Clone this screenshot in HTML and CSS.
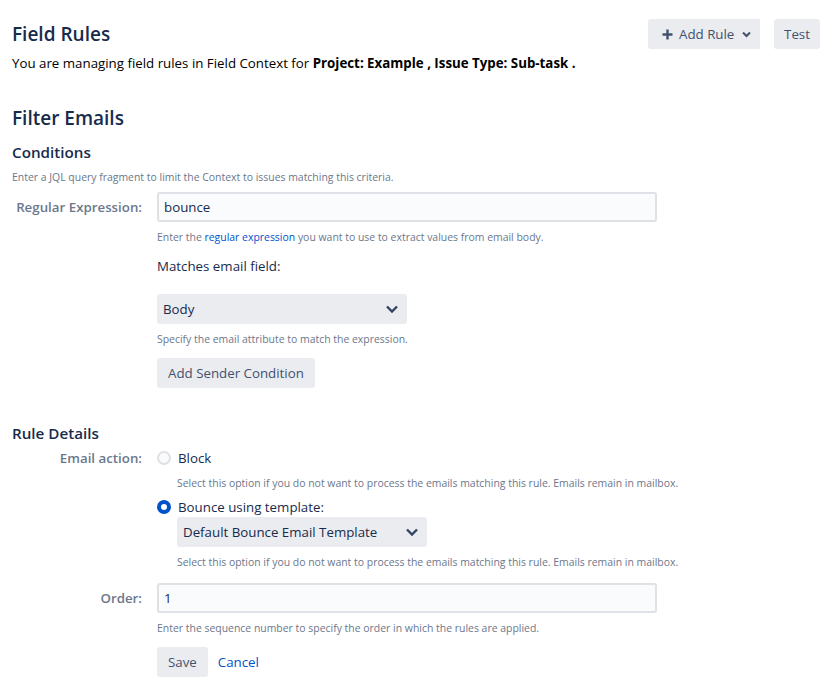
FILE: index.html
```html
<!DOCTYPE html>
<html lang="en">
<head>
    <meta charset="UTF-8">
    <meta name="viewport" content="width=device-width, initial-scale=1.0">
    <title>Field Rules</title>
    <link rel="stylesheet" href="styles.css">
</head>
<body>
    <div class="page">
        <div class="header">
            <h1 class="title">Field Rules</h1>
            <div class="actions">
                <button class="btn btn-drop">
                    <svg class="plus" width="11" height="11" viewBox="0 0 11 11"><path d="M5.5 0.5v10M0.5 5.5h10" stroke="#42526e" stroke-width="2.4"/></svg>
                    <span>Add Rule</span>
                    <svg class="chev-sm" width="9" height="7" viewBox="0 0 9 7"><path d="M1 1.5l3.5 3.5L8 1.5" fill="none" stroke="#42526e" stroke-width="2"/></svg>
                </button>
                <button class="btn btn-test">Test</button>
            </div>
        </div>
        <p class="subtitle">You are managing field rules in Field Context for <b>Project: Example , Issue Type: Sub-task .</b></p>

        <h2 class="rule-name">Filter Emails</h2>
        <h3 class="section">Conditions</h3>
        <p class="desc">Enter a JQL query fragment to limit the Context to issues matching this criteria.</p>

        <form class="formm">
            <div class="row">
                <label class="lbl">Regular Expression:</label>
                <div class="field">
                    <input class="text" type="text" value="bounce">
                    <p class="help">Enter the <a href="#">regular expression</a> you want to use to extract values from email body.</p>
                    <p class="sub-label">Matches email field:</p>
                    <div class="select">
                        <span>Body</span>
                        <svg width="14" height="10" viewBox="0 0 14 10"><path d="M2 2.5l5 5 5-5" fill="none" stroke="#344563" stroke-width="2.4"/></svg>
                    </div>
                    <p class="help">Specify the email attribute to match the expression.</p>
                    <button type="button" class="btn btn-sender">Add Sender Condition</button>
                </div>
            </div>

            <h3 class="section section-details">Rule Details</h3>

            <div class="row">
                <label class="lbl lbl-radio">Email action:</label>
                <div class="field">
                    <div class="radio-row">
                        <span class="radio"></span>
                        <span>Block</span>
                    </div>
                    <p class="help indent">Select this option if you do not want to process the emails matching this rule. Emails remain in mailbox.</p>
                    <div class="radio-row radio-row2">
                        <span class="radio checked"></span>
                        <span>Bounce using template:</span>
                    </div>
                    <div class="select select-tpl">
                        <span>Default Bounce Email Template</span>
                        <svg width="14" height="10" viewBox="0 0 14 10"><path d="M2 2.5l5 5 5-5" fill="none" stroke="#344563" stroke-width="2.4"/></svg>
                    </div>
                    <p class="help indent">Select this option if you do not want to process the emails matching this rule. Emails remain in mailbox.</p>
                </div>
            </div>

            <div class="row row-order">
                <label class="lbl">Order:</label>
                <div class="field">
                    <input class="text" type="text" value="1">
                    <p class="help">Enter the sequence number to specify the order in which the rules are applied.</p>
                    <div class="buttons">
                        <button type="button" class="btn btn-save">Save</button>
                        <a href="#" class="cancel">Cancel</a>
                    </div>
                </div>
            </div>
        </form>
    </div>
</body>
</html>
```

FILE: styles.css
```css
body {
    margin: 0;
    background-color: #fff;
    color: #172b4d;
    font-family: "Open Sans", "Noto Sans", sans-serif;
    font-size: 13.3px;
}
.page {
    padding: 19px 20px 0 12px;
}
.header {
    display: flex;
    justify-content: space-between;
    align-items: center;
    height: 30px;
}
.title {
    margin: 0;
    font-size: 19px;
    font-weight: 600;
    line-height: 30px;
}
.actions {
    display: flex;
    gap: 14px;
}
.btn {
    height: 30px;
    border: none;
    border-radius: 3px;
    background-color: #ebecf0;
    color: #42526e;
    font-family: inherit;
    font-size: 13.3px;
    padding: 0 11px;
    cursor: pointer;
}
.btn-drop {
    display: flex;
    align-items: center;
    width: 112px;
    padding: 0 9px 0 14px;
    border-radius: 3px 0 0 3px;
}
.btn-drop span {
    margin-left: 6px;
}
.chev-sm {
    margin-left: auto;
}
.btn-test {
    width: 46px;
    padding: 0;
}
.subtitle {
    margin: 4px 0 0;
    line-height: 20px;
    color: #000;
}
.subtitle b {
    font-weight: 700;
}
.rule-name {
    margin: 31px 0 0;
    font-size: 19px;
    font-weight: 600;
    line-height: 28px;
}
.section {
    margin: 9px 0 0;
    font-size: 15.2px;
    font-weight: 600;
    line-height: 22px;
}
.desc {
    margin: 6px 0 0;
    font-size: 10.45px;
    line-height: 16px;
    color: #6b778c;
}
.formm {
    margin-top: 7px;
}
.row {
    display: grid;
    grid-template-columns: 130px 1fr;
    column-gap: 15px;
}
.lbl {
    text-align: right;
    white-space: nowrap;
    color: #6b778c;
    font-weight: 600;
    line-height: 30px;
}
.lbl-radio {
    line-height: 20px;
}
.field {
    display: flex;
    flex-direction: column;
    align-items: flex-start;
}
.text {
    box-sizing: border-box;
    width: 500px;
    height: 30px;
    margin: 0;
    border: 2px solid #dfe1e6;
    border-radius: 3px;
    background-color: #fafbfc;
    color: #172b4d;
    font-family: inherit;
    font-size: 13.3px;
    padding: 0 5px;
}
.help {
    margin: 7px 0 0;
    font-size: 10.45px;
    line-height: 16px;
    color: #6b778c;
}
.help a {
    color: #0052cc;
    text-decoration: none;
}
.indent {
    margin-left: 20px;
}
.sub-label {
    margin: 11px 0 0;
    line-height: 20px;
}
.select {
    box-sizing: border-box;
    width: 250px;
    height: 30px;
    margin-top: 18px;
    padding: 0 8px 0 6px;
    display: flex;
    justify-content: space-between;
    align-items: center;
    border-radius: 3px;
    background-color: #ebecf0;
    color: #172b4d;
}
.btn-sender {
    margin-top: 11px;
    color: #42526e;
}
.section-details {
    margin-top: 34px;
}
.section-details + .row {
    margin-top: 4px;
}
.radio-row {
    display: flex;
    align-items: center;
    gap: 7px;
    line-height: 20px;
}
.radio-row2 {
    margin-top: 6px;
}
.radio {
    box-sizing: border-box;
    width: 14px;
    height: 14px;
    border-radius: 50%;
    border: 2px solid #dfe1e6;
    background-color: #fafbfc;
}
.radio.checked {
    border: 4px solid #0052cc;
    background-color: #fff;
}
.select-tpl {
    margin: 0 0 0 20px;
}
.row-order {
    margin-top: 13px;
}
.buttons {
    display: flex;
    align-items: center;
    gap: 10px;
    margin-top: 11px;
}
.cancel {
    color: #0052cc;
    text-decoration: none;
}
```
